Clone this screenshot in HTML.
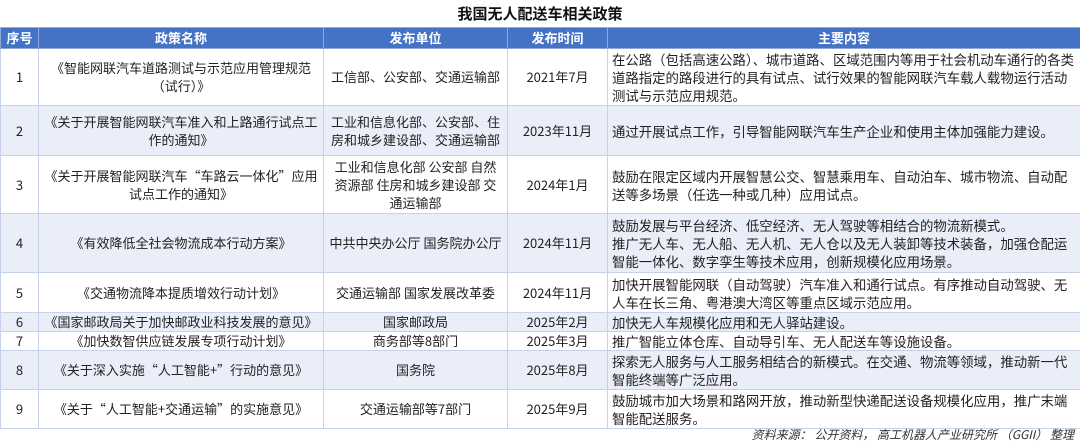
<!DOCTYPE html>
<html><head><meta charset="utf-8"><style>
body{margin:0;width:1080px;height:444px;background:#fff;font-family:"Noto Sans CJK SC","Liberation Sans",sans-serif;overflow:hidden;position:relative}
.t{position:absolute;top:0;left:0;width:1080px;height:27px;line-height:28px;text-align:center;font-weight:bold;font-size:15px;color:#111;border-bottom:1px solid #c9d4ea}
table{position:absolute;top:27px;left:0;border-collapse:collapse;table-layout:fixed;width:1080px}
td,th{border:1px solid #c5d2ea;font-size:13px;line-height:18px;color:#222;padding:0 3px;text-align:center;overflow:hidden}
th{background:#4472c4;color:#fff;height:20px;font-weight:bold;border-color:#8eaadb;font-size:13px}
td.c{text-align:left;padding:0 3px 0 4px;font-size:13.4px}
tr.b td{background:#e9eef8}
.s{position:absolute;top:426px;right:6px;font-size:12px;font-style:italic;color:#333;line-height:18px}
</style></head><body>
<div class="t">我国无人配送车相关政策</div>
<table>
<colgroup><col style="width:38px"><col style="width:285px"><col style="width:184px"><col style="width:100px"><col style="width:473px"></colgroup>
<tr><th>序号</th><th>政策名称</th><th>发布单位</th><th>发布时间</th><th>主要内容</th></tr>
<tr style="height:57px"><td>1</td><td>《智能网联汽车道路测试与示范应用管理规范<br>（试行）》</td><td>工信部、公安部、交通运输部</td><td>2021年7月</td><td class="c">在公路（包括高速公路）、城市道路、区域范围内等用于社会机动车通行的各类道路指定的路段进行的具有试点、试行效果的智能网联汽车载人载物运行活动测试与示范应用规范。</td></tr>
<tr class="b" style="height:50px"><td>2</td><td>《关于开展智能网联汽车准入和上路通行试点工<br>作的通知》</td><td>工业和信息化部、公安部、住<br>房和城乡建设部、交通运输部</td><td>2023年11月</td><td class="c">通过开展试点工作，引导智能网联汽车生产企业和使用主体加强能力建设。</td></tr>
<tr style="height:58px"><td>3</td><td>《关于开展智能网联汽车“车路云一体化”应用<br>试点工作的通知》</td><td>工业和信息化部 公安部 自然<br>资源部 住房和城乡建设部 交<br>通运输部</td><td>2024年1月</td><td class="c">鼓励在限定区域内开展智慧公交、智慧乘用车、自动泊车、城市物流、自动配送等多场景（任选一种或几种）应用试点。</td></tr>
<tr class="b" style="height:59px"><td>4</td><td>《有效降低全社会物流成本行动方案》</td><td style="white-space:nowrap">中共中央办公厅 国务院办公厅</td><td>2024年11月</td><td class="c">鼓励发展与平台经济、低空经济、无人驾驶等相结合的物流新模式。<br>推广无人车、无人船、无人机、无人仓以及无人装卸等技术装备，加强仓配运智能一体化、数字孪生等技术应用，创新规模化应用场景。</td></tr>
<tr style="height:40px"><td>5</td><td>《交通物流降本提质增效行动计划》</td><td>交通运输部 国家发展改革委</td><td>2024年11月</td><td class="c">加快开展智能网联（自动驾驶）汽车准入和通行试点。有序推动自动驾驶、无人车在长三角、粤港澳大湾区等重点区域示范应用。</td></tr>
<tr class="b" style="height:18px"><td>6</td><td style="white-space:nowrap">《国家邮政局关于加快邮政业科技发展的意见》</td><td>国家邮政局</td><td>2025年2月</td><td class="c">加快无人车规模化应用和无人驿站建设。</td></tr>
<tr style="height:18px"><td>7</td><td>《加快数智供应链发展专项行动计划》</td><td>商务部等8部门</td><td>2025年3月</td><td class="c">推广智能立体仓库、自动导引车、无人配送车等设施设备。</td></tr>
<tr class="b" style="height:39px"><td>8</td><td>《关于深入实施“人工智能+”行动的意见》</td><td>国务院</td><td>2025年8月</td><td class="c">探索无人服务与人工服务相结合的新模式。在交通、物流等领域，推动新一代智能终端等广泛应用。</td></tr>
<tr style="height:39px"><td>9</td><td>《关于“人工智能+交通运输”的实施意见》</td><td>交通运输部等7部门</td><td>2025年9月</td><td class="c">鼓励城市加大场景和路网开放，推动新型快递配送设备规模化应用，推广末端智能配送服务。</td></tr>
</table>
<div class="s">资料来源： 公开资料， 高工机器人产业研究所 （GGII） 整理</div>
</body></html>
